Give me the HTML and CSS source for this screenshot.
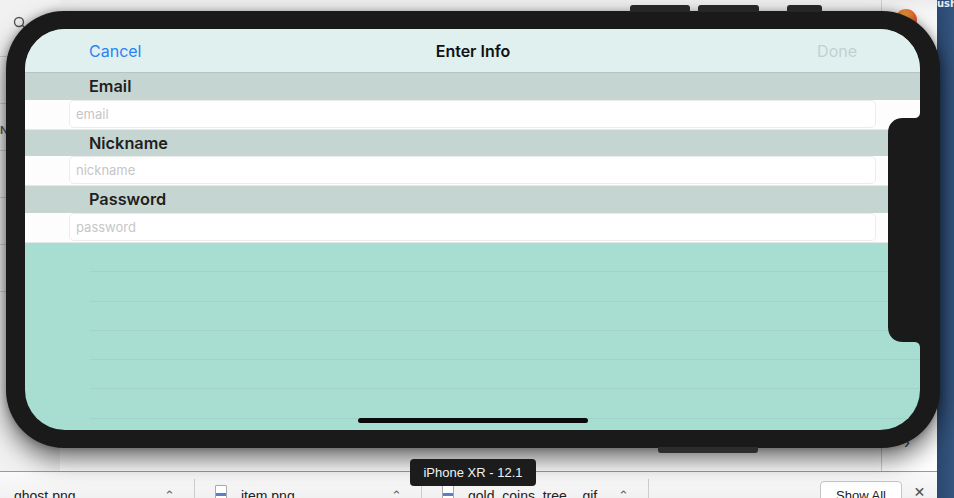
FILE: index.html
```html
<!DOCTYPE html>
<html>
<head>
<meta charset="utf-8">
<title>Enter Info</title>
<link rel="stylesheet" href="styles.css">
</head>
<body>
<div class="desktop">
  <div class="browser">
    <div class="page">
      <div class="sidebar">
        <div class="side-top">
          <svg class="search" width="14" height="14" viewBox="0 0 14 14"><circle cx="6" cy="6" r="4.5" fill="none" stroke="#555" stroke-width="1.4"/><path d="M9.3 9.3 L13 13" stroke="#555" stroke-width="1.6"/></svg>
        </div>
        <div class="side-row"></div>
        <div class="side-row"><span class="side-text">Ne</span></div>
        <div class="side-row"></div>
        <div class="side-row"></div>
        <div class="side-row"></div>
      </div>
      <div class="main"></div>
      <div class="rightcol"><span class="chev-right">›</span></div>
    </div>
    <div class="shelf">
      <div class="dl first">
        <span class="file-icon"></span><span class="dl-name">ghost.png</span><span class="caret">⌃</span>
      </div>
      <div class="dl">
        <span class="file-icon"></span><span class="dl-name">item.png</span><span class="caret">⌃</span>
      </div>
      <div class="dl">
        <span class="file-icon"></span><span class="dl-name">gold_coins_tree....gif</span><span class="caret">⌃</span>
      </div>
      <div class="shelf-spacer"></div>
      <button class="show-all">Show All</button>
      <span class="close">×</span>
    </div>
  </div>
  <div class="dock"><span class="dock-text">ush</span></div>
</div>

<div class="avatar"></div>

<div class="phone">
  <span class="hw-btn top b1"></span>
  <span class="hw-btn top b2"></span>
  <span class="hw-btn top b3"></span>
  <span class="hw-btn bottom b4"></span>
  <div class="screen">
    <div class="nav">
      <span class="nav-left">Cancel</span>
      <span class="nav-title">Enter Info</span>
      <span class="nav-right">Done</span>
    </div>
    <div class="sec-head">Email</div>
    <div class="field-row"><input class="field" type="text" placeholder="email"></div>
    <div class="sec-head">Nickname</div>
    <div class="field-row"><input class="field" type="text" placeholder="nickname"></div>
    <div class="sec-head">Password</div>
    <div class="field-row"><input class="field" type="password" placeholder="password"></div>
    <div class="rest"></div>
    <div class="home-indicator"></div>
    <svg class="notch" width="32" height="236" viewBox="0 0 32 236"><path d="M32 0 C32 4 30 6 26 6 L15 6 C6 6 0 12 0 21 L0 215 C0 224 6 230 15 230 L26 230 C30 230 32 232 32 236 Z" fill="#1a1a1a"/></svg>
  </div>
</div>

<div class="tooltip">iPhone XR - 12.1</div>
</body>
</html>
```

FILE: styles.css
```css
* { box-sizing: border-box; }

body {
  margin: 0;
  width: 954px;
  height: 498px;
  overflow: hidden;
  position: relative;
  background: #fff;
  font-family: Inter, "Noto Sans", sans-serif;
}

.desktop {
  display: flex;
  height: 498px;
}

.browser {
  flex: 1;
  display: flex;
  flex-direction: column;
  background: #fff;
}

.page {
  flex: 1;
  display: flex;
  background: linear-gradient(#ececec 0, #f6f6f6 12px, #fff 40px);
}

.sidebar {
  width: 60px;
  display: flex;
  flex-direction: column;
  background: #f1f1f1;
}

.side-top {
  height: 57px;
  border-bottom: 1px solid #cfcfcf;
  padding: 16px 0 0 13px;
}

.search { display: block; }

.side-row {
  height: 47px;
  border-bottom: 1px solid #cfcfcf;
  padding: 14px 0 0 0;
}

.side-text {
  font-size: 11px;
  color: #555;
  font-weight: 600;
}

.main { flex: 1; }

.rightcol {
  width: 56px;
  border-left: 1px solid #cfcfcf;
  display: flex;
  flex-direction: column;
  justify-content: flex-end;
  padding: 0 0 22px 22px;
}

.chev-right {
  font-size: 16px;
  color: #444;
  line-height: 14px;
}

.shelf {
  height: 27px;
  flex: none;
  border-top: 1px solid #9a9a9a;
  background: linear-gradient(#fafafa, #f1f1f1);
  display: flex;
  overflow: hidden;
}

.dl {
  flex: 0 0 227px;
  display: flex;
  align-items: flex-start;
  padding: 10px 0 0 20px;
  border-right: 1px solid #cdcdcd;
  margin-top: 7px;
  font-family: "Liberation Sans", Arial, sans-serif;
  font-size: 14px;
  color: #222;
}

.dl.first { margin-left: -32px; }

.file-icon {
  width: 12px;
  height: 14px;
  margin-top: -4px;
  border: 1px solid #aaa;
  border-radius: 1px;
  background: linear-gradient(#fff 55%, #5a7fc8 55%, #5a7fc8 80%, #fff 80%);
}

.dl-name {
  margin-left: 14px;
  flex: 1;
  line-height: 14px;
}

.caret {
  width: 30px;
  font-family: "DejaVu Sans", sans-serif;
  font-size: 13px;
  color: #666;
  line-height: 14px;
}

.shelf-spacer { flex: 1; }

.show-all {
  margin: 9px 0 0 0;
  width: 82px;
  height: 24px;
  border: 1px solid #c6c6c6;
  border-radius: 4px;
  background: #fff;
  font-family: "Liberation Sans", Arial, sans-serif;
  font-size: 13px;
  color: #222;
  padding: 4px 0 0;
  text-align: center;
  align-self: flex-start;
}

.close {
  width: 35px;
  text-align: center;
  font-size: 18px;
  color: #555;
  padding-top: 10px;
  line-height: 18px;
}

.dock {
  width: 17px;
  background: linear-gradient(90deg, #2b4870, #34557f);
  overflow: hidden;
}

.dock-text {
  display: block;
  font-family: "DejaVu Sans", sans-serif;
  font-weight: bold;
  font-size: 10px;
  line-height: 9px;
  color: #e6ecf4;
  margin-top: -1px;
  white-space: nowrap;
}

.avatar {
  position: absolute;
  left: 895px;
  top: 9px;
  width: 22px;
  height: 22px;
  border-radius: 50%;
  background: radial-gradient(circle at 40% 40%, #f6c143, #e8552a 70%);
}

.phone {
  position: absolute;
  left: 6px;
  top: 11px;
  width: 934px;
  height: 437px;
  border-radius: 58px;
  background: #1a1a1a;
  padding: 18px 20px 18px 19px;
  box-shadow: 0 12px 24px rgba(0, 0, 0, 0.55), 0 0 8px rgba(0, 0, 0, 0.3);
}

.hw-btn {
  position: absolute;
  background: #262626;
}

.hw-btn.top {
  top: -6px;
  height: 7px;
  border-radius: 3px 3px 0 0;
}

.b1 { left: 624px; width: 60px; }
.b2 { left: 692px; width: 61px; }
.b3 { left: 781px; width: 35px; }

.hw-btn.bottom {
  top: 436px;
  left: 652px;
  width: 100px;
  height: 6px;
  border-radius: 0 0 3px 3px;
  background: #2c2c2c;
}

.screen {
  position: relative;
  height: 100%;
  border-radius: 40px;
  overflow: hidden;
  background: #a8ddd1;
  display: flex;
  flex-direction: column;
}

.nav {
  flex: none;
  height: 44px;
  background: #dff0ee;
  border-bottom: 1px solid #b6c3c0;
  display: grid;
  grid-template-columns: 1fr auto 1fr;
  align-items: center;
  padding: 1px 63px 0 64px;
  font-size: 16px;
}

.nav-left { color: #2a82f6; }

.nav-title {
  font-weight: 600;
  color: #111;
}

.nav-right {
  color: #c2d1ce;
  text-align: right;
}

.sec-head {
  flex: none;
  height: 26.5px;
  background: #c5d5d1;
  padding-left: 64px;
  display: flex;
  align-items: center;
  font-size: 16.3px;
  font-weight: 600;
  color: #1f1f1f;
}

.field-row {
  flex: none;
  height: 30px;
  background: #fdfdfd;
  padding: 0 44px 1px;
  display: flex;
  border-bottom: 1px solid #e4e8e7;
}

.field {
  flex: 1;
  border: 1px solid #ececec;
  border-radius: 5px;
  background: #fff;
  font-family: Inter, "Noto Sans", sans-serif;
  font-size: 13px;
  padding: 0 0 0 6px;
  outline: none;
}

.field::placeholder { color: #c6c6c8; }

.rest {
  flex: 1;
  margin-left: 65px;
  background: repeating-linear-gradient(to bottom, transparent 0, transparent 28.3px, #a2d3c8 28.3px, #a2d3c8 29.3px);
}

.home-indicator {
  position: absolute;
  left: 50%;
  bottom: 7px;
  transform: translateX(-50%);
  width: 230px;
  height: 5px;
  border-radius: 3px;
  background: #0a0a0a;
}

.notch {
  position: absolute;
  right: 0;
  top: 83px;
}

.tooltip {
  position: absolute;
  left: 410px;
  top: 459px;
  width: 126px;
  height: 27px;
  border-radius: 4px;
  background: #1c1c1c;
  color: #f2f2f2;
  font-family: "Liberation Sans", Arial, sans-serif;
  font-size: 13px;
  display: flex;
  align-items: center;
  justify-content: center;
}
```
